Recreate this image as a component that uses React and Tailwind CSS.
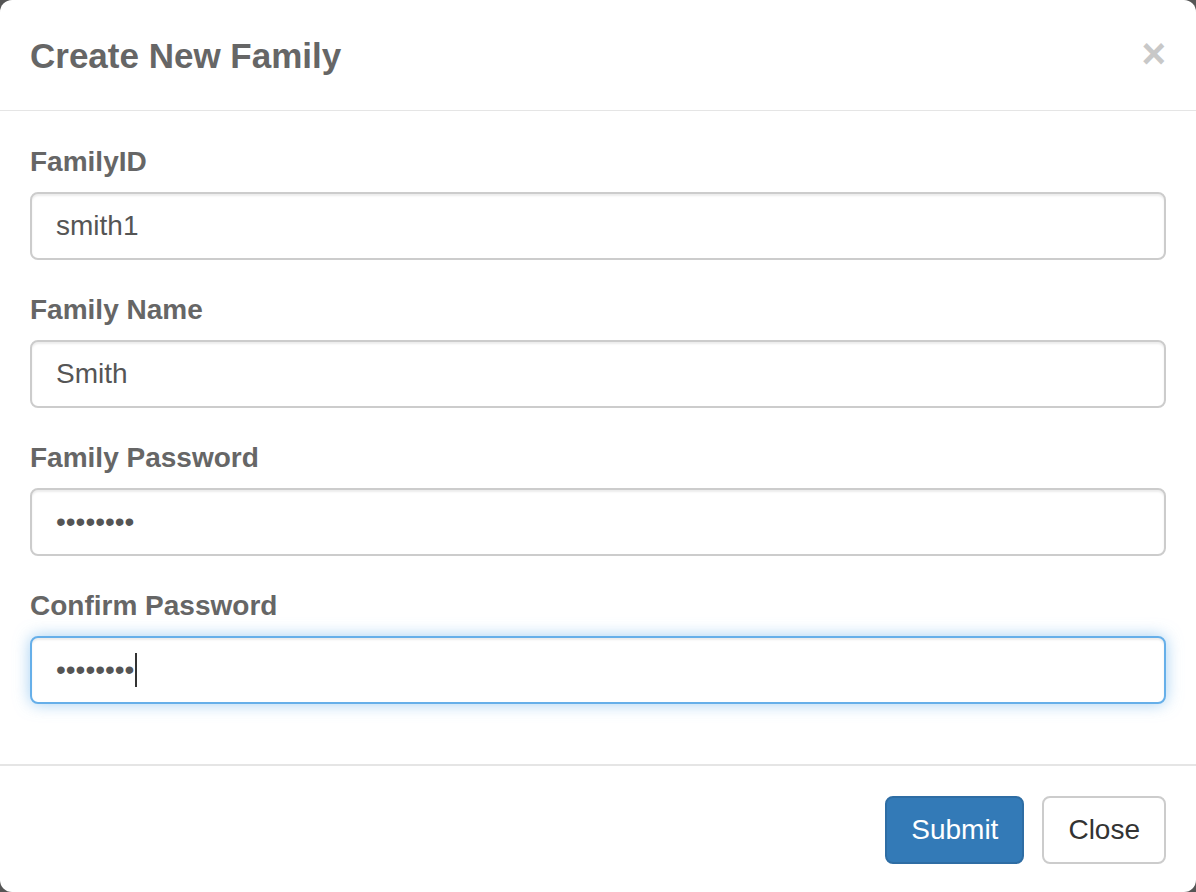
import React from "react";

const Field = ({ label, value, focused, caret }) => (
  <div className="mb-[30px] last:mb-0">
    <label className="mb-[10px] block text-[28px] font-bold leading-[40px] text-[#666]">
      {label}
    </label>
    <div
      className={
        "flex h-[68px] items-center rounded-[8px] border-2 bg-white px-[24px] text-[28px] text-[#555] " +
        (focused
          ? "border-[#66afe9] shadow-[inset_0_2px_2px_rgba(0,0,0,0.075),0_0_16px_rgba(102,175,233,0.6)]"
          : "border-[#ccc] shadow-[inset_0_2px_2px_rgba(0,0,0,0.075)]")
      }
    >
      <span>{value}</span>
      {caret && <span className="ml-[1px] inline-block h-[34px] w-[2px] bg-[#333]" />}
    </div>
  </div>
);

export default function App() {
  return (
    <div
      className="h-[892px] w-[1196px] overflow-hidden bg-[#555]"
      style={{ fontFamily: '"Liberation Sans", Arial, sans-serif' }}
    >
      <div className="h-full w-full rounded-[12px] bg-white">
        <div className="flex h-[111px] items-start justify-between border-b border-[#e5e5e5] px-[30px] pt-[30px]">
          <h4 className="text-[35px] font-bold leading-[51px] text-[#666]">
            Create New Family
          </h4>
          <button className="mt-[-2px] text-[42px] font-bold leading-[51px] text-[#c8c8c8]">
            ×
          </button>
        </div>

        <div className="px-[30px] pt-[31px] pb-[60px]">
          <Field label="FamilyID" value="smith1" />
          <Field label="Family Name" value="Smith" />
          <Field label="Family Password" value="••••••••" />
          <Field label="Confirm Password" value="••••••••" focused caret />
        </div>

        <div className="flex justify-end gap-[18px] border-t-2 border-[#e5e5e5] px-[30px] pt-[30px]">
          <button className="h-[68px] rounded-[8px] border-2 border-[#2e6da4] bg-[#337ab7] px-[24px] text-[28px] text-white">
            Submit
          </button>
          <button className="h-[68px] rounded-[8px] border-2 border-[#ccc] bg-white px-[24px] text-[28px] text-[#333]">
            Close
          </button>
        </div>
      </div>
    </div>
  );
}
